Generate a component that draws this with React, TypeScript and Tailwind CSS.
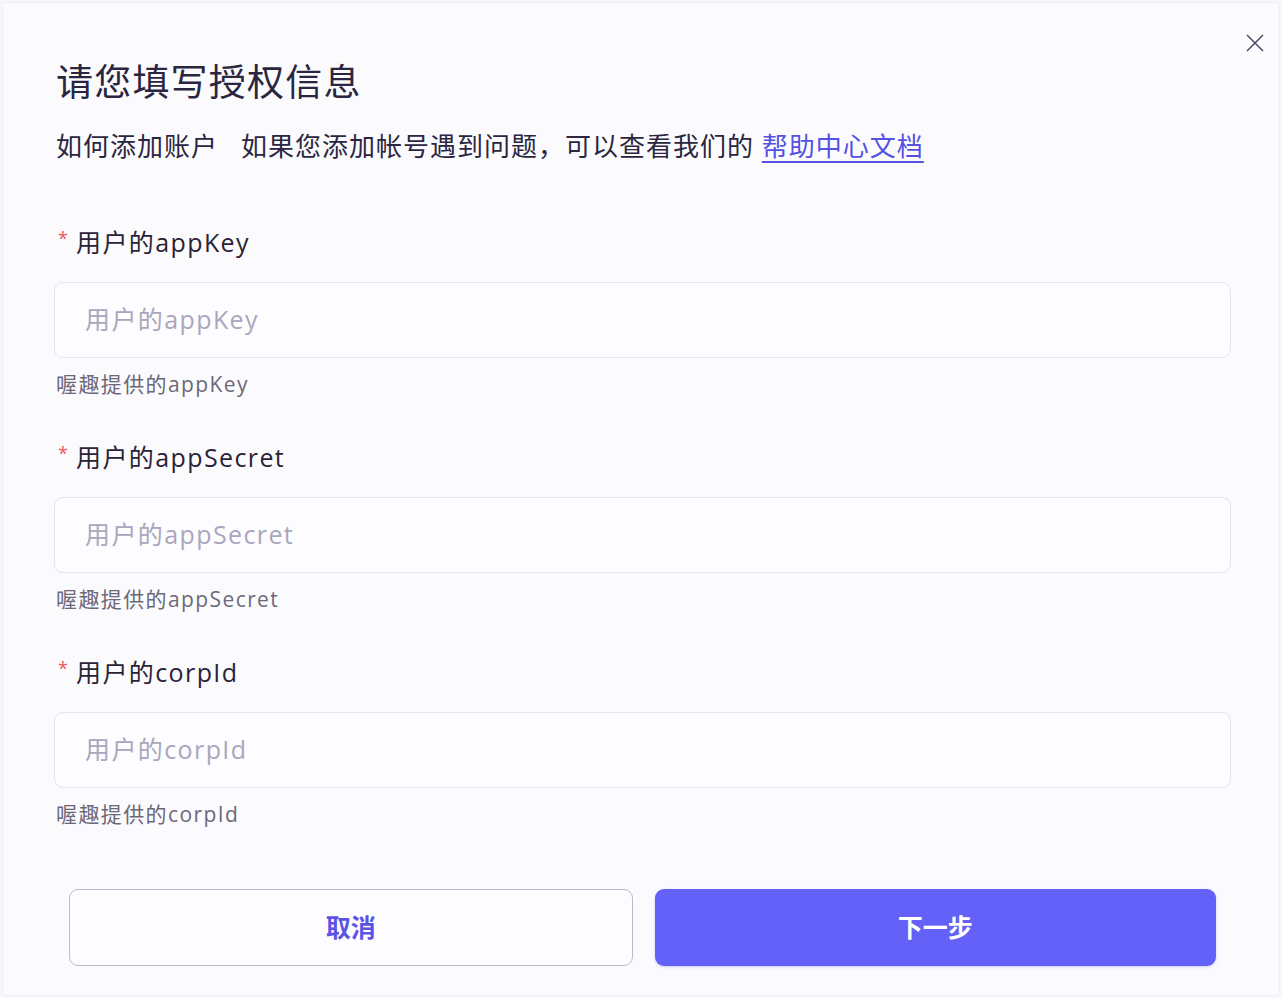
import React from "react";

const FONT = { fontFamily: '"Open Sans", "Noto Sans CJK SC", sans-serif' };

function Field({ label, help }: { label: string; help: string }) {
  return (
    <div className="flex flex-col">
      <div className="flex items-center h-[34px]">
        <span className="text-[#f0555b] text-[18px] leading-none w-[18px] mt-[-8px] ml-[2px]">*</span>
        <span className="text-[25px] leading-[34px] text-[#2a2338] tracking-[1.4px]">{label}</span>
      </div>
      <div className="mt-[23px] -mx-[2px] h-[76px] rounded-[9px] border border-[#e1e4f1] bg-[#fdfdff] flex items-center pl-[30px]">
        <input
          readOnly
          placeholder={label}
          className="w-full bg-transparent outline-none text-[25px] tracking-[1.4px] text-[#2a2338] placeholder:text-[#aaa6bd]"
          style={FONT}
        />
      </div>
      <div className="mt-[12px] h-[28px] text-[21px] leading-[28px] text-[#6d6878] tracking-[1.4px]">{help}</div>
    </div>
  );
}

export default function App() {
  return (
    <div className="w-[1282px] h-[998px] bg-[#f6f7fb] p-[2px]" style={FONT}>
      <div className="relative w-full h-full bg-[#fbfbfe] border border-[#eef0f6] rounded-[3px] flex flex-col pl-[53px] pr-[50px] pt-[57px]">
        <button className="absolute top-[29px] right-[13px] w-[22px] h-[22px] flex items-center justify-center text-[#4e4660]">
          <svg width="18" height="18" viewBox="0 0 18 18" fill="none" stroke="currentColor" strokeWidth="1.5">
            <path d="M1 1L17 17M17 1L1 17" />
          </svg>
        </button>
        <h1 className="text-[37px] leading-[44px] font-normal text-[#2b2640] tracking-[1.2px]">请您填写授权信息</h1>
        <p className="mt-[24px] text-[26px] leading-[36px] text-[#2b2640] tracking-[1px]">
          <span>如何添加账户</span>
          <span className="ml-[23px]">如果您添加帐号遇到问题，可以查看我们的 </span>
          <a className="text-[#5551e3] underline underline-offset-[5px] decoration-[1.5px]" href="#">帮助中心文档</a>
        </p>
        <div className="mt-[61px] flex flex-col gap-[42px]">
          <Field label="用户的appKey" help="喔趣提供的appKey" />
          <Field label="用户的appSecret" help="喔趣提供的appSecret" />
          <Field label="用户的corpId" help="喔趣提供的corpId" />
        </div>
        <div className="mt-[61px] flex gap-[22px] pl-[13px] pr-[13px]">
          <button className="flex-1 h-[77px] rounded-[9px] border border-[#b9bccd] bg-[#fdfdff] text-[25px] font-bold text-[#5a54e6]">
            取消
          </button>
          <button className="flex-1 h-[77px] rounded-[9px] bg-[#6461f8] text-[25px] font-bold text-white shadow-[0_1px_3px_rgba(100,97,248,0.3)]">
            下一步
          </button>
        </div>
      </div>
    </div>
  );
}
